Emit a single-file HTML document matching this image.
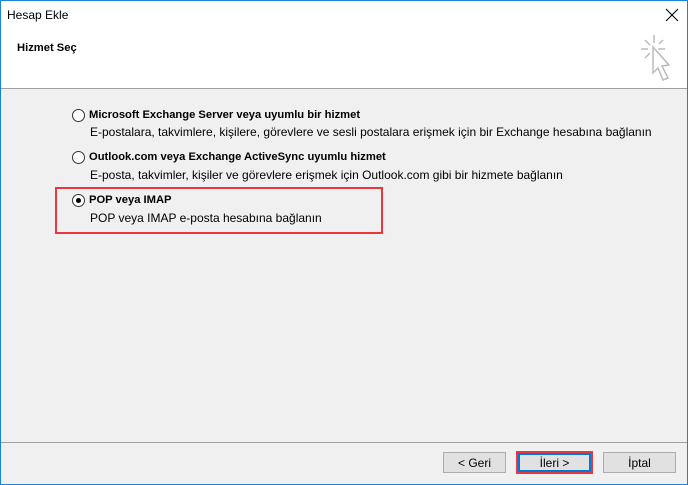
<!DOCTYPE html>
<html><head><style>
*{margin:0;padding:0;box-sizing:border-box}
body{width:688px;height:485px;position:relative;overflow:hidden;background:#f0f0f0;font-family:"Liberation Sans",sans-serif;font-size:12px;color:#000}
.a{position:absolute;white-space:nowrap}
.head{position:absolute;left:0;top:0;width:688px;height:89px;background:#fff;border-bottom:1px solid #a0a0a0}
.frame{position:absolute;left:0;top:0;width:688px;height:485px;border:1px solid #1883d7;pointer-events:none}
.radio{position:absolute;width:13px;height:13px;border:1px solid #333;border-radius:50%;background:#fff}
.dot{position:absolute;left:3px;top:3px;width:5px;height:5px;border-radius:50%;background:#000}
.b{font-weight:bold;font-size:11.2px}
.btn{position:absolute;height:21px;background:#e1e1e1;border:1px solid #adadad;text-align:center;line-height:20px;font-size:12px}
</style></head><body>
<div class="head"></div>
<div class="a" style="left:7px;top:8px;font-size:12px">Hesap Ekle</div>
<svg class="a" style="left:665px;top:8px" width="14" height="14"><path d="M1 1L13 13M13 1L1 13" stroke="#000" stroke-width="1.1"/></svg>
<div class="a b" style="left:17px;top:42px">Hizmet Seç</div>
<svg class="a" style="left:638px;top:33px" width="40" height="54">
<g stroke="#bbb" stroke-width="1.5" fill="none">
<path d="M16 2V10M16 17V21M3 16H10M20 16H27M7 7L12 12M25 7L21 11M7 25L12 20"/>
<path d="M15 14L31 32L24 33L30 45L25 47L20 35L15 40Z" fill="#fff"/>
</g></svg>
<div class="radio" style="left:72px;top:109px"></div>
<div class="a b" style="left:89px;top:109px">Microsoft Exchange Server veya uyumlu bir hizmet</div>
<div class="a" style="left:90px;top:125px">E-postalara, takvimlere, kişilere, görevlere ve sesli postalara erişmek için bir Exchange hesabına bağlanın</div>
<div class="radio" style="left:72px;top:151px"></div>
<div class="a b" style="left:89px;top:151px">Outlook.com veya Exchange ActiveSync uyumlu hizmet</div>
<div class="a" style="left:90px;top:168px">E-posta, takvimler, kişiler ve görevlere erişmek için Outlook.com gibi bir hizmete bağlanın</div>
<div class="a" style="left:55px;top:187px;width:328px;height:47px;border:2px solid #e8383d"></div>
<div class="radio" style="left:72px;top:194px"><div class="dot"></div></div>
<div class="a b" style="left:89px;top:194px">POP veya IMAP</div>
<div class="a" style="left:90px;top:211px">POP veya IMAP e-posta hesabına bağlanın</div>
<div class="a" style="left:1px;top:442px;width:686px;border-top:1px solid #a0a0a0"></div>
<div class="btn" style="left:443px;top:452px;width:63px">&lt; Geri</div>
<div class="btn" style="left:516px;top:451px;width:77px;height:23px;border:2px solid #e8383d;line-height:17px"><div style="border:2px solid #0078d7;height:19px">İleri &gt;</div></div>
<div class="btn" style="left:603px;top:452px;width:73px">İptal</div>
<div class="frame"></div>
</body></html>
